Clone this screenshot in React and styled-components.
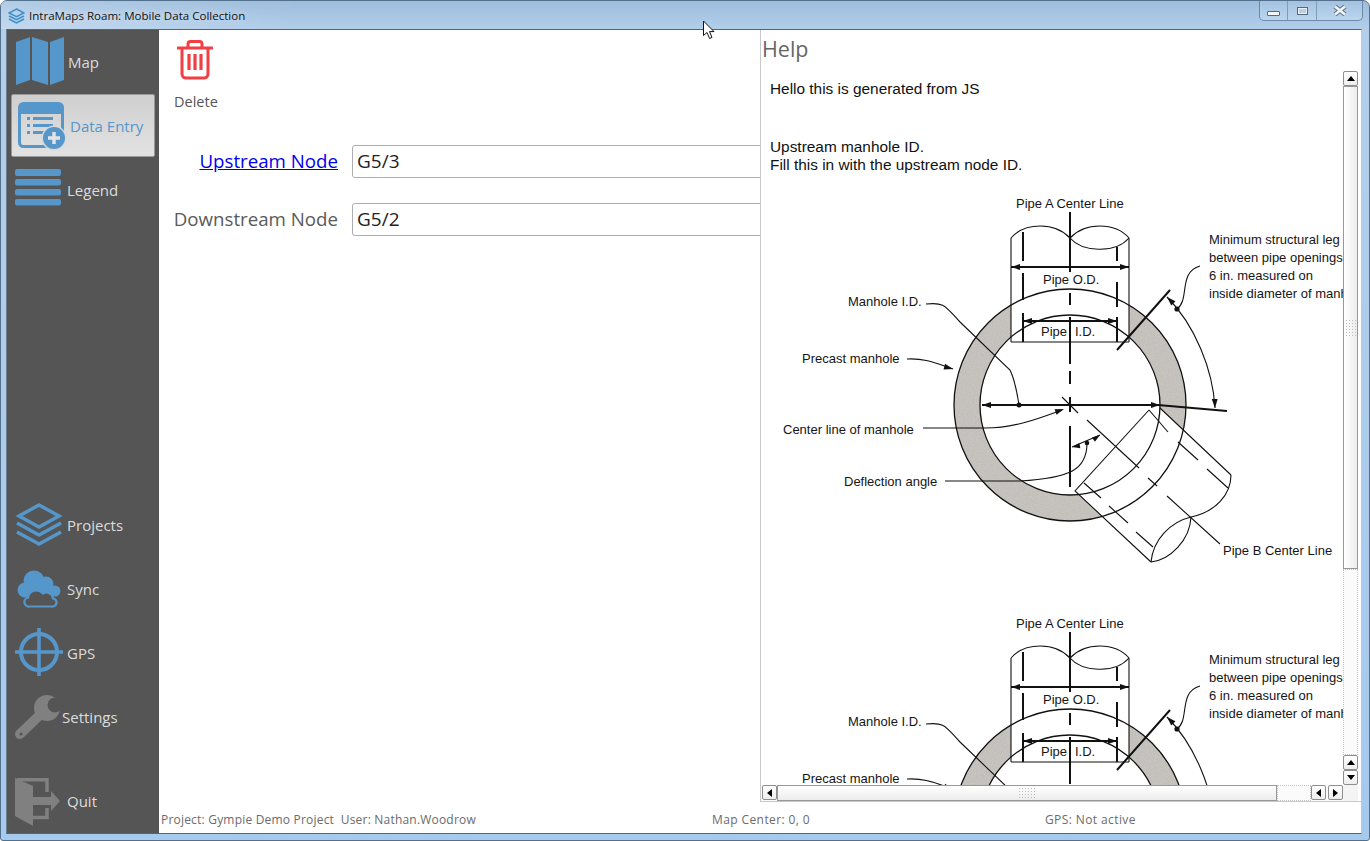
import React from "react";
import styled, { createGlobalStyle } from "styled-components";

const GlobalStyle = createGlobalStyle`
  html, body {
    margin: 0;
    padding: 0;
    background: #fff;
    overflow: hidden;
  }
`;

const BLUE = "#5596cb";
const GREY = "#808080";
const PANEL = "#555555";

const Window = styled.div`
  position: relative;
  width: 1370px;
  height: 841px;
  box-sizing: border-box;
  display: flex;
  flex-direction: column;
  border: 1px solid #53708d;
  border-radius: 7px 7px 3px 3px;
  background: linear-gradient(180deg, #9dbddd 0, #b3cfeb 30px, #a6c9ee 100%);
  font-family: "Open Sans", "Noto Sans", sans-serif;
`;

const TitleBar = styled.div`
  height: 28px;
  flex: none;
  display: flex;
  align-items: flex-start;
  padding-left: 7px;
  background: linear-gradient(90deg, rgba(255, 255, 255, 0.22), rgba(255, 255, 255, 0) 300px);
`;

const TitleIcon = styled.svg`
  width: 17px;
  height: 16px;
  margin-top: 7px;
`;

const TitleText = styled.span`
  margin: 6px 0 0 4px;
  font-size: 11.55px;
  line-height: 18px;
  color: #111;
  text-shadow: 0 0 7px rgba(255, 255, 255, 0.8);
`;

const WindowControls = styled.div`
  margin-left: auto;
  margin-right: 6px;
  height: 20px;
  display: flex;
  box-sizing: border-box;
  border: 1px solid #6e8aa6;
  border-top: 0;
  border-radius: 0 0 5px 5px;
  background: linear-gradient(180deg, #a3c2e0, #bcd5ee);
`;

const ControlButton = styled.div`
  width: ${(p) => p.$w}px;
  display: flex;
  align-items: center;
  justify-content: center;
  border-left: ${(p) => (p.$first ? "0" : "1px solid #7f9cb8")};
`;

const MinGlyph = styled.span`
  width: 11px;
  height: 3px;
  margin-top: 5px;
  background: #f4f7fa;
  border: 1px solid #56687a;
  border-radius: 1px;
`;

const MaxGlyph = styled.span`
  width: 7px;
  height: 4px;
  background: #b9d0e6;
  border: 2px solid #e9eff5;
  outline: 1px solid #56687a;
  outline-offset: -1px;
`;

const Client = styled.div`
  height: 803px;
  margin: 0 7px 0 5px;
  display: flex;
  background: #fff;
  border-top: 1px solid #56646f;
  border-left: 1px solid #6c7c8a;
  border-right: 1px solid #c2c8cc;
  border-bottom: 1px solid #56646f;
`;

const Sidebar = styled.nav`
  width: 152px;
  flex: none;
  display: flex;
  flex-direction: column;
  background: ${PANEL};
`;

const NavItem = styled.div`
  height: ${(p) => (p.$active ? 63 : 64)}px;
  box-sizing: border-box;
  display: flex;
  align-items: center;
  gap: ${(p) => p.$gap}px;
  padding-left: ${(p) => p.$pad}px;
  padding-top: ${(p) => (p.$active ? 1 : 0)}px;
  margin: ${(p) => (p.$active ? "0 4px 1px" : "0")};
  margin-top: ${(p) => p.$top || 0}px;
  font-size: 15px;
  color: ${(p) => (p.$active ? BLUE : "#dcdcdc")};
  border: ${(p) => (p.$active ? "1px solid #9a9a9a" : "0")};
  border-radius: 2px;
  background: ${(p) => (p.$active ? "linear-gradient(180deg, #cfcfcf, #e2e2e2)" : "none")};
`;

const IconSlot = styled.span`
  display: block;
  flex: none;
  transform: translateY(${(p) => p.$dy || 0}px);
`;

const BottomNav = styled.div`
  margin-top: auto;
  display: flex;
  flex-direction: column;
`;

const Workspace = styled.div`
  flex: 1;
  min-width: 0;
  display: flex;
  flex-direction: column;
`;

const Panes = styled.div`
  flex: 1;
  min-height: 0;
  display: flex;
`;

const FormPane = styled.div`
  width: 601px;
  flex: none;
  overflow: hidden;
`;

const Toolbar = styled.div`
  height: 115px;
  box-sizing: border-box;
  padding: 10px 0 0 15px;
  display: flex;
  flex-direction: column;
  align-items: flex-start;
`;

const ToolIcon = styled.svg`
  width: 36px;
  height: 40px;
  margin-left: 3px;
`;

const ToolLabel = styled.span`
  margin-top: 12px;
  font-size: 14.5px;
  line-height: 20px;
  color: #555;
`;

const FieldRow = styled.div`
  display: flex;
  align-items: center;
  margin-bottom: 25px;
`;

const FieldLabel = styled.div`
  width: 179px;
  flex: none;
  padding-bottom: 2px;
  text-align: right;
  font-size: 18.7px;
  color: #5a5a5a;

  a {
    color: #0000ee;
    text-decoration: underline;
  }
`;

const FieldInput = styled.div`
  flex: none;
  width: 420px;
  height: 33px;
  box-sizing: border-box;
  margin-left: 14px;
  padding-left: 4px;
  border: 1px solid #adadad;
  border-radius: 3px;
  font-size: 19px;
  line-height: 31px;
  color: #222;
`;

const HelpPane = styled.aside`
  width: 601px;
  flex: none;
  box-sizing: border-box;
  padding-top: 4px;
  display: flex;
  flex-direction: column;
  background: #fff;
  border-left: 1px solid #c8c8c8;
  border-bottom: 1px solid #c8c8c8;
`;

const HelpTitle = styled.div`
  height: 37px;
  flex: none;
  padding-left: 1px;
  font-size: 21.5px;
  line-height: 30px;
  color: #666;
`;

const HelpFrame = styled.div`
  flex: 1;
  min-height: 0;
  display: grid;
  grid-template-columns: 582px 15px;
  grid-template-rows: minmax(0, 1fr) 16px;
`;

const HelpBody = styled.div`
  overflow: hidden;
  padding: 9px 0 0 9px;
  font-family: "Liberation Sans", Arial, sans-serif;
  font-size: 15.4px;
  line-height: 18px;
  color: #111;

  p {
    margin: 0;
  }
  p + p {
    margin-top: 40px;
  }
`;

const Figures = styled.div`
  margin-top: 16px;
`;

const Figure = styled.svg`
  display: block;
  width: 600px;
  height: 420px;
`;

const Label = styled.text`
  font-family: "Liberation Sans", Arial, sans-serif;
  font-size: 13px;
  fill: #151515;
`;

const ScrollBar = styled.div`
  display: flex;
  flex-direction: ${(p) => (p.$horizontal ? "row" : "column")};
  box-sizing: border-box;
  min-height: 0;
  background: #fbfbfb;
  ${(p) => p.$horizontal && "padding-left: 1px;"}
`;

const ScrollButton = styled.div`
  width: 15px;
  height: 15px;
  flex: none;
  box-sizing: border-box;
  display: flex;
  align-items: center;
  justify-content: center;
  border: 1px solid #8e8e8e;
  border-radius: 2px;
  background: linear-gradient(180deg, #fff, #eee);
  font-size: 0;
`;

const Triangle = styled.span`
  width: 0;
  height: 0;
  border: 4px solid transparent;
  ${(p) =>
    ({
      up: "border-top: 0; border-bottom: 5px solid #000;",
      down: "border-bottom: 0; border-top: 5px solid #000;",
      left: "border-left: 0; border-right: 5px solid #000;",
      right: "border-right: 0; border-left: 5px solid #000;",
    })[p.$dir]}
`;

const ScrollThumb = styled.div`
  flex: none;
  box-sizing: border-box;
  width: ${(p) => (p.$horizontal ? "500px" : "auto")};
  height: ${(p) => (p.$horizontal ? "auto" : "483px")};
  display: flex;
  align-items: center;
  justify-content: center;
  border: 1px solid #989898;
  background: ${(p) =>
    p.$horizontal
      ? "linear-gradient(180deg, #fff, #ececec)"
      : "linear-gradient(90deg, #fff, #ececec)"};
`;

const Grip = styled.span`
  width: ${(p) => (p.$horizontal ? 18 : 12)}px;
  height: ${(p) => (p.$horizontal ? 12 : 18)}px;
  background-image: radial-gradient(#bdbdbd 0.7px, transparent 0.8px);
  background-size: 3px 3px;
`;

const ScrollTrack = styled.div`
  flex: 1;
  border: 1px dotted #c4c4c4;
`;

const ButtonGap = styled.div`
  flex: none;
  width: 2px;
  height: 1px;
`;

const Corner = styled.div`
  background: #f4f4f4;
`;

const StatusBar = styled.div`
  height: 31px;
  flex: none;
  box-sizing: border-box;
  padding: 3px 0 0 2px;
  display: grid;
  grid-template-columns: 551px 333px 1fr;
  align-items: center;
  font-size: 12px;
  color: #6b6b6b;
`;

const StatusItem = styled.span`
  letter-spacing: ${(p) => p.$spacing}px;
`;

const Cursor = styled.svg`
  position: absolute;
  left: 701px;
  top: 19px;
  width: 14px;
  height: 20px;
`;

const NavSvg = styled.svg`
  display: block;
`;

const StackIcon = () => (
  <TitleIcon viewBox="0 0 17 16">
    <g fill="none" stroke="#3a8fc9" strokeWidth="1.5">
      <path d="M8.5 1 16 5 8.5 8.6 1 5z" />
      <path d="M1 8 8.5 11.6 16 8" />
      <path d="M1 11 8.5 14.8 16 11" />
    </g>
  </TitleIcon>
);

const MapIcon = () => (
  <NavSvg width="50" height="48" viewBox="0 0 50 48" fill={BLUE}>
    <path d="M1 5 15 0V43L1 48z" />
    <path d="M17 0 33 5V48L17 43z" />
    <path d="M35 5 49 0V43L35 48z" />
  </NavSvg>
);

const DataEntryIcon = () => (
  <NavSvg width="49" height="48" viewBox="0 0 49 48">
    <rect x="1.5" y="1.5" width="43" height="43" rx="4" fill="none" stroke={BLUE} strokeWidth="3" />
    <path d="M1 5a4 4 0 0 1 4-4h36a4 4 0 0 1 4 4v7H1z" fill={BLUE} />
    <g fill={BLUE}>
      <rect x="9" y="15" width="3" height="3" />
      <rect x="15" y="15" width="20" height="3" />
      <rect x="9" y="22" width="3" height="3" />
      <rect x="15" y="22" width="20" height="3" />
      <rect x="9" y="29" width="3" height="3" />
      <rect x="15" y="29" width="13" height="3" />
    </g>
    <circle cx="36" cy="36" r="12.5" fill="#d8d8d8" />
    <circle cx="36" cy="36" r="11" fill={BLUE} />
    <path d="M36 30v12M30 36h12" stroke="#e4e4e4" strokeWidth="3.4" />
  </NavSvg>
);

const LegendIcon = () => (
  <NavSvg width="46" height="37" viewBox="0 0 46 37" fill={BLUE}>
    <rect y="0" width="46" height="7" rx="2" />
    <rect y="10" width="46" height="6.5" rx="2" />
    <rect y="20" width="46" height="6.5" rx="2" />
    <rect y="30" width="46" height="6.5" rx="2" />
  </NavSvg>
);

const ProjectsIcon = () => (
  <NavSvg width="48" height="43" viewBox="0 0 48 43" fill="none" stroke={BLUE} strokeWidth="3.5">
    <path d="M24 2 44 13 24 24 4 13z" />
    <path d="M2 20 24 32 46 20" />
    <path d="M2 29 24 41 46 29" />
  </NavSvg>
);

const SyncIcon = () => (
  <NavSvg width="44" height="38" viewBox="0 0 44 38">
    <g fill={BLUE}>
      <circle cx="17" cy="11" r="10.5" />
      <circle cx="8" cy="20" r="7.5" />
      <circle cx="29" cy="14" r="7.5" />
      <circle cx="38" cy="21" r="5.5" />
      <rect x="6" y="14" width="30" height="12" />
    </g>
    <path
      d="M13 36.5h22a4 4 0 0 0 1-8 6.5 6.5 0 0 0-10-5 8.5 8.5 0 0 0-15 4 4.6 4.6 0 0 0 2 9z"
      fill={PANEL}
      stroke={BLUE}
      strokeWidth="2.2"
    />
  </NavSvg>
);

const GpsIcon = () => (
  <NavSvg width="48" height="48" viewBox="0 0 48 48" fill="none" stroke={BLUE}>
    <circle cx="24" cy="24" r="18" strokeWidth="4" />
    <path d="M24 0V48M0 24H48" strokeWidth="3.6" />
  </NavSvg>
);

const SettingsIcon = () => (
  <NavSvg width="46" height="46" viewBox="0 0 46 46">
    <path d="M6 39 28 18" stroke={GREY} strokeWidth="10" strokeLinecap="round" />
    <circle cx="33" cy="13" r="13" fill={GREY} />
    <circle cx="41" cy="10" r="7.5" fill={PANEL} />
    <path d="M38 8 46 0V14z" fill={PANEL} />
    <circle cx="7" cy="39" r="1.6" fill={PANEL} />
  </NavSvg>
);

const QuitIcon = () => (
  <NavSvg width="45" height="48" viewBox="0 0 45 48" fill={GREY}>
    <path d="M0 0 18 8V48L0 38z" />
    <path d="M2 1.7H32V14M32 30V39.5H18" fill="none" stroke={GREY} strokeWidth="3.5" />
    <path d="M18 19H36V13L45 23 36 33V27H18z" />
  </NavSvg>
);

const TrashIcon = () => (
  <ToolIcon viewBox="0 0 36 40">
    <g fill="none" stroke="#f23f43" strokeWidth="3">
      <path d="M1 8H35" strokeLinecap="round" />
      <path d="M11 7V4a2.5 2.5 0 0 1 2.5-2.5h9A2.5 2.5 0 0 1 25 4v3" />
      <path d="M5 8V34a4 4 0 0 0 4 4H27a4 4 0 0 0 4-4V8" />
      <path d="M12 14V30M18 14V30M24 14V30" strokeWidth="3.2" />
    </g>
  </ToolIcon>
);

// arrow head with its tip at x,y pointing along the angle in degrees
const Head = ({ x, y, a, s = 9 }) => (
  <polygon
    points={`0,0 ${-s},${-s * 0.33} ${-s},${s * 0.33}`}
    transform={`translate(${x} ${y}) rotate(${a})`}
    fill="#111"
  />
);

const thick = [
  "M1070 212V272M1070 293V305M1070 317V364M1070 371V384M1070 397V412M1070 426V487",
  "M1023 232V261M1023 273V300M1023 313V342",
  "M1117 247V261M1117 282V307M1117 317V342",
  "M1011 267H1129M1023 321H1117M982 405H1158",
  "M1117 350 1170 290M1158 405 1227 411",
];

const thin = [
  "M1011 342V238M1129 238V342M1011 342H1129",
  "M1011 238C1025 222 1055 222 1070 238C1082 252 1115 254 1129 238M1070 238C1085 222 1115 222 1129 238",
  "M926 304C945 302 945 306 960 322L1010 370C1015 380 1017 392 1019 405",
  "M907 359C925 358 935 363 953 369",
  "M923 428H985C1015 428 1040 418 1062 410",
  "M945 481H1020C1070 478 1087 470 1087 443",
  "M1072 447 1100 435",
  "M1200 266C1178 272 1190 300 1177 309",
  "M1167 297C1195 325 1213 370 1215 408",
  "M1062 397 1078 413M1087 420 1139 468M1148 478 1157 486M1167 496 1220 544",
  "M1149 410 1075 491L1151 562M1160 408 1231 475",
  "M1231 475C1231 495 1215 512 1191 517C1170 522 1153 540 1151 562",
  "M1191 517C1190 540 1170 560 1151 562",
  "M1084 483 1101 498M1109 506 1128 523M1136 532 1153 547",
  "M1149 410 1168 432M1178 442 1198 460M1207 469 1228 488",
];

const ManholeFigure = () => (
  <Figure viewBox="770 190 600 420">
    <defs>
      <filter id="grain" x="0" y="0" width="100%" height="100%">
        <feTurbulence type="fractalNoise" baseFrequency="0.9" numOctaves="2" seed="4" />
        <feColorMatrix values="0 0 0 0 0.45 0 0 0 0 0.43 0 0 0 0 0.42 0.9 0 0 0 -0.25" />
        <feComposite in2="SourceAlpha" operator="in" />
        <feMerge>
          <feMergeNode in="SourceGraphic" />
          <feMergeNode />
        </feMerge>
      </filter>
    </defs>
    <path
      fillRule="evenodd"
      fill="#c9c6c1"
      filter="url(#grain)"
      d="M954 405a116 116 0 1 0 232 0a116 116 0 1 0-232 0zM980 405a90 90 0 1 0 180 0a90 90 0 1 0-180 0z"
    />
    <path d="M1011 238H1129V342H1011z" fill="#fff" />
    <path d="M1149 410 1075 491 1151 562 1191 517 1231 475 1160 408z" fill="#fff" />
    <g fill="none" stroke="#111">
      <circle cx="1070" cy="405" r="116" strokeWidth="1.3" />
      <circle cx="1070" cy="405" r="90" strokeWidth="1.3" />
      {thin.map((d) => (
        <path key={d} d={d} strokeWidth="1.1" />
      ))}
      {thick.map((d) => (
        <path key={d} d={d} strokeWidth="2" />
      ))}
    </g>
    <Head x={1011} y={267} a={180} />
    <Head x={1129} y={267} a={0} />
    <Head x={1023} y={321} a={180} />
    <Head x={1117} y={321} a={0} />
    <Head x={982} y={405} a={180} />
    <Head x={1160} y={405} a={0} />
    <Head x={953} y={369} a={15} />
    <Head x={1064} y={409} a={-20} />
    <Head x={1072} y={447} a={170} s={8} />
    <Head x={1100} y={435} a={-35} s={8} />
    <Head x={1167} y={297} a={-135} />
    <Head x={1215} y={408} a={88} />
    <circle cx="1019" cy="405" r="2.5" fill="#111" />
    <circle cx="1087" cy="443" r="2.3" fill="#111" />
    <circle cx="1177" cy="309" r="2.6" fill="#111" />
    <Label x="1016" y="208">Pipe A Center Line</Label>
    <Label x="1043" y="284">Pipe O.D.</Label>
    <Label x="1041" y="336">Pipe</Label>
    <Label x="1075" y="336">I.D.</Label>
    <Label x="1209" y="244">Minimum structural leg</Label>
    <Label x="1209" y="262">between pipe openings</Label>
    <Label x="1209" y="280">6 in. measured on</Label>
    <Label x="1209" y="298">inside diameter of manhole</Label>
    <Label x="848" y="306">Manhole I.D.</Label>
    <Label x="802" y="363">Precast manhole</Label>
    <Label x="783" y="434">Center line of manhole</Label>
    <Label x="844" y="486">Deflection angle</Label>
    <Label x="1223" y="555">Pipe B Center Line</Label>
  </Figure>
);

const topNav = [
  { label: "Map", icon: <MapIcon />, pad: 8, gap: 3, dy: -1 },
  { label: "Data Entry", icon: <DataEntryIcon />, pad: 6, gap: 3, active: true },
  { label: "Legend", icon: <LegendIcon />, pad: 8, gap: 6, dy: -3 },
];

const bottomNav = [
  { label: "Projects", icon: <ProjectsIcon />, pad: 8, gap: 4, dy: -1 },
  { label: "Sync", icon: <SyncIcon />, pad: 10, gap: 6 },
  { label: "GPS", icon: <GpsIcon />, pad: 8, gap: 4, dy: -1 },
  { label: "Settings", icon: <SettingsIcon />, pad: 7, gap: 2, dy: 1 },
  { label: "Quit", icon: <QuitIcon />, pad: 8, gap: 7, top: 20, dy: 1 },
];

const renderNav = (item) => (
  <NavItem key={item.label} $pad={item.pad} $gap={item.gap} $active={item.active} $top={item.top}>
    <IconSlot $dy={item.dy}>{item.icon}</IconSlot>
    <span>{item.label}</span>
  </NavItem>
);

export default function App() {
  return (
    <>
      <GlobalStyle />
      <Window>
        <TitleBar>
          <StackIcon />
          <TitleText>IntraMaps Roam: Mobile Data Collection</TitleText>
          <WindowControls>
            <ControlButton $w={27} $first>
              <MinGlyph />
            </ControlButton>
            <ControlButton $w={28}>
              <MaxGlyph />
            </ControlButton>
            <ControlButton $w={45}>
              <svg width="14" height="11" viewBox="0 0 14 11">
                <path d="M2 1.5 12 9.5M12 1.5 2 9.5" stroke="#5d6f80" strokeWidth="4.6" />
                <path d="M2 1.5 12 9.5M12 1.5 2 9.5" stroke="#eef3f7" strokeWidth="2.8" />
              </svg>
            </ControlButton>
          </WindowControls>
        </TitleBar>
        <Client>
          <Sidebar>
            {topNav.map(renderNav)}
            <BottomNav>{bottomNav.map(renderNav)}</BottomNav>
          </Sidebar>
          <Workspace>
            <Panes>
              <FormPane>
                <Toolbar>
                  <TrashIcon />
                  <ToolLabel>Delete</ToolLabel>
                </Toolbar>
                <FieldRow>
                  <FieldLabel>
                    <a href="#upstream">Upstream Node</a>
                  </FieldLabel>
                  <FieldInput>G5/3</FieldInput>
                </FieldRow>
                <FieldRow>
                  <FieldLabel>Downstream Node</FieldLabel>
                  <FieldInput>G5/2</FieldInput>
                </FieldRow>
              </FormPane>
              <HelpPane>
                <HelpTitle>Help</HelpTitle>
                <HelpFrame>
                  <HelpBody>
                    <p>Hello this is generated from JS</p>
                    <p>
                      Upstream manhole ID.
                      <br />
                      Fill this in with the upstream node ID.
                    </p>
                    <Figures>
                      <ManholeFigure />
                      <ManholeFigure />
                    </Figures>
                  </HelpBody>
                  <ScrollBar>
                    <ScrollButton>
                      <Triangle $dir="up" />
                    </ScrollButton>
                    <ScrollThumb>
                      <Grip />
                    </ScrollThumb>
                    <ScrollTrack />
                    <ScrollButton>
                      <Triangle $dir="up" />
                    </ScrollButton>
                    <ScrollButton>
                      <Triangle $dir="down" />
                    </ScrollButton>
                  </ScrollBar>
                  <ScrollBar $horizontal>
                    <ScrollButton>
                      <Triangle $dir="left" />
                    </ScrollButton>
                    <ScrollThumb $horizontal>
                      <Grip $horizontal />
                    </ScrollThumb>
                    <ScrollTrack />
                    <ScrollButton>
                      <Triangle $dir="left" />
                    </ScrollButton>
                    <ButtonGap />
                    <ScrollButton>
                      <Triangle $dir="right" />
                    </ScrollButton>
                  </ScrollBar>
                  <Corner />
                </HelpFrame>
              </HelpPane>
            </Panes>
            <StatusBar>
              <StatusItem $spacing={0.2}>Project: Gympie Demo Project &nbsp;User: Nathan.Woodrow</StatusItem>
              <StatusItem $spacing={0.4}>Map Center: 0, 0</StatusItem>
              <StatusItem $spacing={0.4}>GPS: Not active</StatusItem>
            </StatusBar>
          </Workspace>
        </Client>
        <Cursor viewBox="0 0 14 20">
          <path d="M1.5 1V15.5L5 12.5 7.6 18.5 10 17.4 7.5 11.6H12z" fill="#fff" stroke="#111" strokeWidth="1" />
        </Cursor>
      </Window>
    </>
  );
}
